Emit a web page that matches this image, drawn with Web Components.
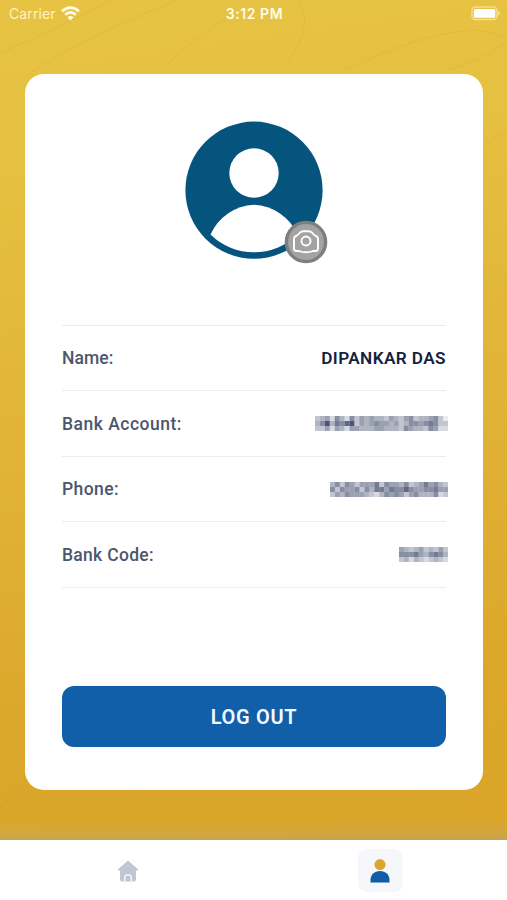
<!DOCTYPE html>
<html lang="en">
<head>
<meta charset="UTF-8">
<meta name="viewport" content="width=device-width, initial-scale=1.0">
<title>Profile</title>
<style>
    html, body { height: 100%; }
    body {
        margin: 0;
        overflow: hidden;
        font-family: Roboto, 'Liberation Sans', sans-serif;
    }
</style>
</head>
<body>
<profile-screen>
    <status-bar slot="status" carrier="Carrier" time="3:12 PM"></status-bar>
    <profile-card>
        <user-avatar slot="avatar"></user-avatar>
        <info-row label="Name:"><span>DIPANKAR DAS</span></info-row>
        <info-row label="Bank Account:" style="--tracking: 0.5px"><masked-value kind="account"></masked-value></info-row>
        <info-row label="Phone:" style="--tracking: 0.4px"><masked-value kind="phone"></masked-value></info-row>
        <info-row label="Bank Code:" style="--tracking: 0.3px"><masked-value kind="code"></masked-value></info-row>
        <action-button slot="action">LOG OUT</action-button>
    </profile-card>
    <tab-bar slot="tabs"></tab-bar>
</profile-screen>

<script>
    class ProfileScreen extends HTMLElement {
        connectedCallback() {
            this.attachShadow({ mode: 'open' });
            this.shadowRoot.innerHTML = `
                <style>
                    :host {
                        display: flex;
                        flex-direction: column;
                        height: 900px;
                        position: relative;
                        background: linear-gradient(172deg, #e7c344 0%, #e6c040 18%, #e1b437 45%, #dba72b 76%, #daa528 100%);
                    }
                    .waves {
                        position: absolute;
                        inset: 0;
                        pointer-events: none;
                    }
                    .content {
                        flex: 1;
                        position: relative;
                        display: flex;
                        padding: 46px 24.5px 50px 25px;
                        background: linear-gradient(to top, rgba(165, 160, 145, 0.45), rgba(175, 170, 150, 0.2) 6px, transparent 20px);
                    }
                    ::slotted(profile-card) { flex: 1; }
                    ::slotted(status-bar), ::slotted(tab-bar) { position: relative; }
                </style>
                <svg class="waves" width="507" height="840" fill="none" stroke="#b58d2b" stroke-opacity=".15">
                    <path d="M0 53Q55 30 110 0M22 79Q60 49 177 0M165 67Q195 37 228 17"/>
                    <path d="M299 0C310 20 305 47 277 71M340 71C390 50 430 32 476 30Q492 31 507 38M446 71Q483 60 507 41"/>
                    <path d="M483 145Q499 137 507 128M0 808Q15 792 25 785M58 824Q90 805 145 791"/>
                </svg>
                <slot name="status"></slot>
                <div class="content"><slot></slot></div>
                <slot name="tabs"></slot>
            `;
        }
    }

    class StatusBar extends HTMLElement {
        connectedCallback() {
            this.attachShadow({ mode: 'open' });
            this.shadowRoot.innerHTML = `
                <style>
                    :host {
                        display: grid;
                        grid-template-columns: 1fr auto 1fr;
                        align-items: center;
                        height: 28px;
                        padding: 0 7px 1px 9px;
                        box-sizing: border-box;
                        color: #fffbe6;
                        font: 400 14px Inter, sans-serif;
                    }
                    .left { display: flex; align-items: center; gap: 5px; }
                    .carrier { letter-spacing: 0.1px; color: #fff3c4; }
                    .time { font-weight: 600; font-size: 14px; letter-spacing: 0.55px; }
                    .battery { justify-self: end; }
                    svg { display: block; }
                </style>
                <div class="left">
                    <span class="carrier">${this.getAttribute('carrier')}</span>
                    <svg width="19" height="15" viewBox="0 0 19 15" fill="none" stroke="#fffdf0" stroke-width="2.7">
                        <path d="M1 5.3Q9.5 -1.9 18 5.3M4.2 8.7Q9.5 4.2 14.8 8.7"/>
                        <path d="M9.5 14.5L6.5 11.3Q9.5 8.9 12.5 11.3Z" fill="#fffdf0" stroke="none"/>
                    </svg>
                </div>
                <span class="time">${this.getAttribute('time')}</span>
                <svg class="battery" width="29" height="15" viewBox="0 0 29 15">
                    <rect x="1" y="1" width="25" height="12.5" rx="3.5" fill="none" stroke="#f5e08f" stroke-width="1.4"/>
                    <rect x="2.8" y="3" width="21.5" height="8.8" rx="1.5" fill="#fff"/>
                    <path d="M27 5Q28.8 5.5 28.8 7.2Q28.8 9 27 9.5Z" fill="#f5e08f"/>
                </svg>
            `;
        }
    }

    class ProfileCard extends HTMLElement {
        connectedCallback() {
            this.attachShadow({ mode: 'open' });
            this.shadowRoot.innerHTML = `
                <style>
                    :host {
                        display: flex;
                        flex-direction: column;
                        box-sizing: border-box;
                        padding: 47px 36.5px 43px 37px;
                        border-radius: 19px;
                        background: #fff;
                    }
                    .avatar { display: flex; justify-content: center; height: 203.5px; }
                    .rows { border-top: 1.5px solid #ebecee; }
                    .action { margin-top: auto; }
                </style>
                <div class="avatar"><slot name="avatar"></slot></div>
                <div class="rows"><slot></slot></div>
                <div class="action"><slot name="action"></slot></div>
            `;
        }
    }

    class UserAvatar extends HTMLElement {
        connectedCallback() {
            this.attachShadow({ mode: 'open' });
            this.shadowRoot.innerHTML = `
                <style>
                    :host { display: block; position: relative; width: 138px; height: 138px; }
                    svg { display: block; }
                    .camera { position: absolute; left: 99px; top: 99px; }
                </style>
                <svg width="138" height="138" viewBox="0 0 138 138">
                    <circle cx="69" cy="69.2" r="68.6" fill="#04547e"/>
                    <circle cx="69" cy="52" r="24.7" fill="#fff"/>
                    <path d="M25.5 113.5A50 50 0 0 1 69 83.7A50 50 0 0 1 112.5 113.5A62 62 0 0 1 25.5 113.5Z" fill="#fff"/>
                </svg>
                <svg class="camera" width="44" height="44" viewBox="0 0 44 44" fill="none">
                    <circle cx="22" cy="22" r="19.6" fill="#a3a3a3" stroke="#7e7e7e" stroke-width="3.4"/>
                    <path d="M10 18.5Q10 16.7 12 16C15.5 14.8 15.2 11.3 19 11.3H25C28.8 11.3 28.5 14.8 32 16Q34 16.7 34 18.5V28.5Q34 31 31.5 31H29Q26 32.3 22 32.3T15 31H12.5Q10 31 10 28.5Z" stroke="#fff" stroke-width="1.9" stroke-linejoin="round"/>
                    <circle cx="22" cy="21" r="4.5" stroke="#fff" stroke-width="1.9"/>
                </svg>
            `;
        }
    }

    class InfoRow extends HTMLElement {
        connectedCallback() {
            this.attachShadow({ mode: 'open' });
            this.shadowRoot.innerHTML = `
                <style>
                    :host {
                        display: flex;
                        align-items: center;
                        justify-content: space-between;
                        box-sizing: border-box;
                        height: 65.5px;
                        padding-top: 1px;
                        border-bottom: 1.5px solid #ebecee;
                        font-weight: 500;
                        font-size: 17.5px;
                    }
                    .label { color: #4c566d; letter-spacing: var(--tracking, 0.08px); }
                    ::slotted(span) {
                        color: #14213f;
                        font-weight: 600;
                        font-size: 17.2px;
                        letter-spacing: 0.4px;
                    }
                </style>
                <span class="label">${this.getAttribute('label')}</span>
                <slot></slot>
            `;
        }
    }

    // Each string is one line of blocks, a digit per block: 0 is clear, 9 is darkest
    const MASKS = {
        account: ['345264263545443543563445631', '469476893545655453466567633', '335254255444554443654436522'],
        phone: ['463653555736554634575643', '636556364775766865566755', '354655543246565356444623'],
        code: ['5434534353', '6667546764', '3424323432']
    };

    class MaskedValue extends HTMLElement {
        connectedCallback() {
            const rows = MASKS[this.getAttribute('kind')];
            const size = 5;
            const width = rows[0].length * size;
            const blocks = rows.map((row, y) => [...row].map((level, x) =>
                `<rect x="${x * size}" y="${y * size}" width="${size}" height="${size}" fill-opacity="${level / 11}"/>`
            ).join('')).join('');
            this.attachShadow({ mode: 'open' });
            this.shadowRoot.innerHTML = `
                <style>
                    :host { display: block; margin-right: -2px; }
                    svg { display: block; filter: blur(0.6px); }
                </style>
                <svg width="${width * 0.985}" height="15" viewBox="0 0 ${width} 15" preserveAspectRatio="none" fill="#233056">${blocks}</svg>
            `;
        }
    }

    class ActionButton extends HTMLElement {
        connectedCallback() {
            this.attachShadow({ mode: 'open' });
            this.shadowRoot.innerHTML = `
                <style>
                    :host { display: block; }
                    button {
                        display: block;
                        width: 100%;
                        height: 61px;
                        padding: 0;
                        border: 0;
                        border-radius: 12px;
                        background: #115ea9;
                        color: #f3faff;
                        font: 600 20px Roboto, sans-serif;
                        letter-spacing: 0.7px;
                    }
                </style>
                <button><slot></slot></button>
            `;
        }
    }

    class TabBar extends HTMLElement {
        connectedCallback() {
            this.attachShadow({ mode: 'open' });
            this.shadowRoot.innerHTML = `
                <style>
                    :host {
                        display: flex;
                        height: 60px;
                        box-sizing: border-box;
                        background: #fff;
                    }
                    .tab { flex: 1; display: flex; justify-content: center; padding-top: 9px; }
                    .icon {
                        display: flex;
                        align-items: center;
                        justify-content: center;
                        width: 45px;
                        height: 43px;
                        border-radius: 9px;
                    }
                    .home { padding-left: 2px; }
                    .active { background: #f5f7fa; }
                </style>
                <div class="tab">
                    <div class="icon home">
                        <svg width="22" height="22" viewBox="0 0 22 22">
                            <path d="M11 .5L21.5 9.8Q21 10.6 19 10.3V19.5Q19 21.5 17 21.5H5Q3 21.5 3 19.5V10.3Q1 10.6 .5 9.8Z" fill="#c1c6d2"/>
                            <path d="M7.8 21.5V17.5Q7.8 14.7 11 14.7T14.2 17.5V21.5" fill="none" stroke="#f5f6f9" stroke-width="1.5"/>
                        </svg>
                    </div>
                </div>
                <div class="tab">
                    <div class="icon active">
                        <svg width="20" height="24" viewBox="0 0 20 24">
                            <circle cx="10" cy="5.6" r="5.5" fill="#dba62d"/>
                            <path d="M.5 23.5V21C.5 15.5 4.5 12 10 12S19.5 15.5 19.5 21V23.5Z" fill="#115ca8"/>
                        </svg>
                    </div>
                </div>
            `;
        }
    }

    customElements.define('profile-screen', ProfileScreen);
    customElements.define('status-bar', StatusBar);
    customElements.define('profile-card', ProfileCard);
    customElements.define('user-avatar', UserAvatar);
    customElements.define('info-row', InfoRow);
    customElements.define('masked-value', MaskedValue);
    customElements.define('action-button', ActionButton);
    customElements.define('tab-bar', TabBar);
</script>
</body>
</html>
